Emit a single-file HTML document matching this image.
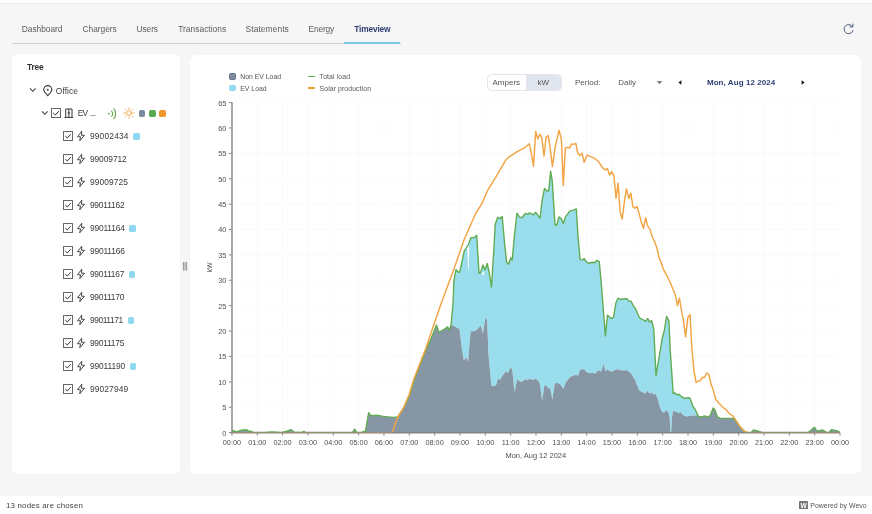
<!DOCTYPE html>
<html><head><meta charset="utf-8"><title>Timeview</title>
<style>
*{box-sizing:border-box;margin:0;padding:0}
html,body{width:872px;height:514px;overflow:hidden;background:#f6f6f6;font-family:"Liberation Sans",sans-serif;color:#555}
.abs{position:absolute}
#top{position:absolute;left:0;top:0;width:872px;height:3.6px;background:#fff;border-bottom:1.2px solid #e9e9e9}
.tab{position:absolute;top:23.7px;font-size:8.4px;line-height:11px;color:#5c5c5c;white-space:nowrap}
.tab.act{color:#2f3f73;font-weight:bold}
#tabline{position:absolute;left:12px;top:42.5px;width:389px;height:1px;background:#cfcfcf}
#actline{position:absolute;left:344px;top:41.9px;width:56.3px;height:1.7px;background:#7ccaea}
.card{position:absolute;background:#fff;border-radius:6.5px}
#tree{left:11.8px;top:54.4px;width:168.4px;height:419.2px}
#chart{left:189.5px;top:54.5px;width:671px;height:419px}
#footer{position:absolute;left:0;top:495.5px;width:872px;height:19px;background:#fff}
.row{position:absolute;left:0;height:16px;width:180px}
.cb{position:absolute;top:3.2px;width:9.8px;height:9.8px;border:0.8px solid #666;border-radius:0.6px;background:#fff}
.cb svg{position:absolute;left:-0.9px;top:-0.9px;width:10px;height:10px;fill:none;stroke:#333;stroke-width:1}
.bolt{position:absolute;left:74.9px;top:2px;width:12px;height:12px;fill:none;stroke:#333;stroke-width:1.8;stroke-linejoin:round}
.t{position:absolute;top:2.9px;font-size:8.4px;line-height:11px;color:#3a3a3a;white-space:nowrap}
.sq{position:absolute;top:5.1px;width:6.5px;height:6.5px;border-radius:1.7px}
.lg{position:absolute;font-size:6.85px;line-height:9px;color:#555;white-space:nowrap}
.ctl{position:absolute;font-size:8px;line-height:10px;color:#555;white-space:nowrap}
svg text{font-family:"Liberation Sans",sans-serif}
</style></head><body><div id="root" style="position:absolute;left:0;top:0;width:872px;height:514px;will-change:transform">
<div id="top"></div>
<span class="tab" style="left:21.75px;letter-spacing:-0.028px">Dashboard</span>
<span class="tab" style="left:82.50px;letter-spacing:-0.027px">Chargers</span>
<span class="tab" style="left:136.60px;letter-spacing:-0.106px">Users</span>
<span class="tab" style="left:178.20px;letter-spacing:0.031px">Transactions</span>
<span class="tab" style="left:245.60px;letter-spacing:0.087px">Statements</span>
<span class="tab" style="left:308.50px;letter-spacing:-0.145px">Energy</span>
<span class="tab act" style="left:354.25px;letter-spacing:-0.175px">Timeview</span>
<div id="tabline"></div><div id="actline"></div>
<svg class="abs" style="left:842px;top:23px;width:13px;height:12px" viewBox="0 0 13 12" fill="none" stroke="#4d5a7a" stroke-width="1" stroke-linecap="round" stroke-linejoin="round"><path d="M10.6 3.6 A4.6 4.6 0 1 0 11.1 7.6"/><path d="M10.9 1 V3.9 H8"/></svg>

<div class="card" id="tree"></div>
<div class="card" id="chart"></div>

<span class="abs" style="left:27px;top:61.5px;font-size:8.4px;line-height:11px;font-weight:bold;color:#333;letter-spacing:-0.210px">Tree</span>
<!-- office row -->
<svg class="abs" style="left:29px;top:87px;width:8px;height:6px" viewBox="0 0 8 6" fill="none" stroke="#444" stroke-width="1.1"><path d="M1 1.3 L3.8 4.3 L6.6 1.3"/></svg>
<svg class="abs" style="left:41.6px;top:84.6px;width:12px;height:12px" viewBox="0 0 11 11" fill="none" stroke="#333" stroke-width="1"><path d="M5.3 9.8 C3 7.4 1.6 5.9 1.6 4.3 A3.7 3.7 0 0 1 9 4.3 C9 5.9 7.6 7.4 5.3 9.8 Z"/><circle cx="5.3" cy="4.4" r="0.9" fill="#333" stroke="none"/></svg>
<span class="t" style="left:55.8px;top:85.6px;letter-spacing:0.085px">Office</span>
<!-- EV row -->
<svg class="abs" style="left:41px;top:110px;width:8px;height:6px" viewBox="0 0 8 6" fill="none" stroke="#444" stroke-width="1.1"><path d="M1 1.3 L3.8 4.3 L6.6 1.3"/></svg>
<span class="cb" style="left:50.9px;top:108.3px"><svg viewBox="0 0 10 10"><path d="M2.3 5.1 L4.3 7 L7.8 3.2"/></svg></span>
<svg class="abs" style="left:64px;top:108px;width:10px;height:10px" viewBox="0 0 10 10" fill="none" stroke="#333" stroke-width="1"><path d="M1.7 9.3 V1 H8 V9.3 M0.6 9.4 H9.2 M4.85 1 V9.3 M3.6 5 H6.1"/></svg>
<span class="t" style="left:77.8px;top:108.3px;letter-spacing:-0.958px">EV</span><span class="t" style="left:90px;top:108.3px;letter-spacing:-0.434px">...</span>
<svg class="abs" style="left:106px;top:106.8px;width:13.4px;height:13.4px" viewBox="0 0 12 12" fill="none" stroke="#6aa84f" stroke-width="1" stroke-linecap="round"><circle cx="2.6" cy="6" r="0.8" fill="#6aa84f" stroke="none"/><path d="M5 3.6 A3.6 3.6 0 0 1 5 8.4"/><path d="M7 1.6 A6.5 6.5 0 0 1 7 10.4"/></svg>
<svg class="abs" style="left:123px;top:107px;width:12px;height:12px" viewBox="0 0 12 12" fill="none" stroke="#f0a040" stroke-width="0.9" stroke-linecap="round"><circle cx="6" cy="6" r="2.3"/><path d="M6 0.8 V2.2 M6 9.8 V11.2 M0.8 6 H2.2 M9.8 6 H11.2 M2.3 2.3 L3.3 3.3 M8.7 8.7 L9.7 9.7 M2.3 9.7 L3.3 8.7 M8.7 3.3 L9.7 2.3"/></svg>
<i class="sq abs" style="left:138.6px;top:110px;background:#7b8a9e"></i>
<i class="sq abs" style="left:149.1px;top:110px;background:#5aab4f"></i>
<i class="sq abs" style="left:159.4px;top:110px;background:#f0982e"></i>
<div class="row" style="top:128px"><span class="cb" style="left:63px"><svg viewBox="0 0 10 10"><path d="M2.3 5.1 L4.3 7 L7.8 3.2"/></svg></span><svg class="bolt" viewBox="0 0 24 24"><path d="M13.5 2.5 L5 13.5 H11 L9.5 21.5 L19 10.5 H13 Z"/></svg><span class="t" style="left:89.9px;letter-spacing:0.191px">99002434</span><i class="sq" style="left:133.10px;background:#8fd9f0"></i></div><div class="row" style="top:151px"><span class="cb" style="left:63px"><svg viewBox="0 0 10 10"><path d="M2.3 5.1 L4.3 7 L7.8 3.2"/></svg></span><svg class="bolt" viewBox="0 0 24 24"><path d="M13.5 2.5 L5 13.5 H11 L9.5 21.5 L19 10.5 H13 Z"/></svg><span class="t" style="left:89.9px;letter-spacing:-0.055px">99009712</span></div><div class="row" style="top:174px"><span class="cb" style="left:63px"><svg viewBox="0 0 10 10"><path d="M2.3 5.1 L4.3 7 L7.8 3.2"/></svg></span><svg class="bolt" viewBox="0 0 24 24"><path d="M13.5 2.5 L5 13.5 H11 L9.5 21.5 L19 10.5 H13 Z"/></svg><span class="t" style="left:89.9px;letter-spacing:0.111px">99009725</span></div><div class="row" style="top:197px"><span class="cb" style="left:63px"><svg viewBox="0 0 10 10"><path d="M2.3 5.1 L4.3 7 L7.8 3.2"/></svg></span><svg class="bolt" viewBox="0 0 24 24"><path d="M13.5 2.5 L5 13.5 H11 L9.5 21.5 L19 10.5 H13 Z"/></svg><span class="t" style="left:89.9px;letter-spacing:-0.191px">99011162</span></div><div class="row" style="top:220px"><span class="cb" style="left:63px"><svg viewBox="0 0 10 10"><path d="M2.3 5.1 L4.3 7 L7.8 3.2"/></svg></span><svg class="bolt" viewBox="0 0 24 24"><path d="M13.5 2.5 L5 13.5 H11 L9.5 21.5 L19 10.5 H13 Z"/></svg><span class="t" style="left:89.9px;letter-spacing:-0.138px">99011164</span><i class="sq" style="left:129.40px;background:#8fd9f0"></i></div><div class="row" style="top:243px"><span class="cb" style="left:63px"><svg viewBox="0 0 10 10"><path d="M2.3 5.1 L4.3 7 L7.8 3.2"/></svg></span><svg class="bolt" viewBox="0 0 24 24"><path d="M13.5 2.5 L5 13.5 H11 L9.5 21.5 L19 10.5 H13 Z"/></svg><span class="t" style="left:89.9px;letter-spacing:-0.138px">99011166</span></div><div class="row" style="top:266px"><span class="cb" style="left:63px"><svg viewBox="0 0 10 10"><path d="M2.3 5.1 L4.3 7 L7.8 3.2"/></svg></span><svg class="bolt" viewBox="0 0 24 24"><path d="M13.5 2.5 L5 13.5 H11 L9.5 21.5 L19 10.5 H13 Z"/></svg><span class="t" style="left:89.9px;letter-spacing:-0.224px">99011167</span><i class="sq" style="left:128.75px;background:#8fd9f0"></i></div><div class="row" style="top:289px"><span class="cb" style="left:63px"><svg viewBox="0 0 10 10"><path d="M2.3 5.1 L4.3 7 L7.8 3.2"/></svg></span><svg class="bolt" viewBox="0 0 24 24"><path d="M13.5 2.5 L5 13.5 H11 L9.5 21.5 L19 10.5 H13 Z"/></svg><span class="t" style="left:89.9px;letter-spacing:-0.224px">99011170</span></div><div class="row" style="top:312px"><span class="cb" style="left:63px"><svg viewBox="0 0 10 10"><path d="M2.3 5.1 L4.3 7 L7.8 3.2"/></svg></span><svg class="bolt" viewBox="0 0 24 24"><path d="M13.5 2.5 L5 13.5 H11 L9.5 21.5 L19 10.5 H13 Z"/></svg><span class="t" style="left:89.9px;letter-spacing:-0.391px">99011171</span><i class="sq" style="left:127.50px;background:#8fd9f0"></i></div><div class="row" style="top:335px"><span class="cb" style="left:63px"><svg viewBox="0 0 10 10"><path d="M2.3 5.1 L4.3 7 L7.8 3.2"/></svg></span><svg class="bolt" viewBox="0 0 24 24"><path d="M13.5 2.5 L5 13.5 H11 L9.5 21.5 L19 10.5 H13 Z"/></svg><span class="t" style="left:89.9px;letter-spacing:-0.224px">99011175</span></div><div class="row" style="top:358px"><span class="cb" style="left:63px"><svg viewBox="0 0 10 10"><path d="M2.3 5.1 L4.3 7 L7.8 3.2"/></svg></span><svg class="bolt" viewBox="0 0 24 24"><path d="M13.5 2.5 L5 13.5 H11 L9.5 21.5 L19 10.5 H13 Z"/></svg><span class="t" style="left:89.9px;letter-spacing:-0.111px">99011190</span><i class="sq" style="left:129.60px;background:#8fd9f0"></i></div><div class="row" style="top:381px"><span class="cb" style="left:63px"><svg viewBox="0 0 10 10"><path d="M2.3 5.1 L4.3 7 L7.8 3.2"/></svg></span><svg class="bolt" viewBox="0 0 24 24"><path d="M13.5 2.5 L5 13.5 H11 L9.5 21.5 L19 10.5 H13 Z"/></svg><span class="t" style="left:89.9px;letter-spacing:0.145px">99027949</span></div>
<!-- splitter -->
<svg class="abs" style="left:182px;top:261px;width:6px;height:11px" viewBox="0 0 6 11" stroke="#777" stroke-width="0.75"><path d="M1.4 1 V9.6 M3 1 V9.6 M4.6 1 V9.6"/></svg>

<!-- legend -->
<i class="abs" style="left:229.2px;top:73.4px;width:6.6px;height:6.6px;border-radius:1.6px;background:#7d8ba0;border:0.8px solid #68768c"></i>
<span class="lg" style="left:240.3px;top:72.1px">Non EV Load</span>
<i class="abs" style="left:229.2px;top:84.6px;width:6.6px;height:6.6px;border-radius:1.6px;background:#9adcf0;border:0.8px solid #8ad4ec"></i>
<span class="lg" style="left:240.3px;top:83.5px">EV Load</span>
<i class="abs" style="left:308px;top:75.7px;width:6.5px;height:1.8px;border-radius:1px;background:#5aab4f"></i>
<span class="lg" style="left:319.6px;top:72.1px;letter-spacing:0.116px">Total load</span>
<i class="abs" style="left:308px;top:87.1px;width:6.5px;height:1.8px;border-radius:1px;background:#f0982e"></i>
<span class="lg" style="left:319.6px;top:83.5px;letter-spacing:0.100px">Solar production</span>

<!-- controls -->
<div class="abs" style="left:487px;top:73.5px;width:75px;height:17.4px;border:1px solid #e3e5ea;border-radius:4.5px;background:#fff;overflow:hidden"><div style="position:absolute;left:37.5px;top:0;width:38px;height:17px;background:#e1e5ee"></div></div>
<span class="ctl" style="left:492.5px;top:77.6px">Ampers</span>
<span class="ctl" style="left:537.5px;top:77.6px">kW</span>
<span class="ctl" style="left:575px;top:77.6px">Period:</span>
<span class="ctl" style="left:618.3px;top:77.6px">Daily</span>
<svg class="abs" style="left:656px;top:80px;width:7px;height:5px" viewBox="0 0 7 5"><path d="M0.7 1.3 H6.3 L3.5 4.1 Z" fill="#666"/></svg>
<svg class="abs" style="left:677px;top:79px;width:6px;height:7px" viewBox="0 0 6 7"><path d="M4.4 1.2 V5.8 L1.4 3.5 Z" fill="#111"/></svg>
<span class="ctl" style="left:706.9px;top:78.3px;font-weight:bold;color:#2f3f73;letter-spacing:0.072px">Mon, Aug 12 2024</span>
<svg class="abs" style="left:799.5px;top:79px;width:6px;height:7px" viewBox="0 0 6 7"><path d="M1.6 1.2 V5.8 L4.6 3.5 Z" fill="#111"/></svg>

<!-- chart -->
<svg class="abs" style="left:0;top:0;width:872px;height:514px" viewBox="0 0 872 514">
<g stroke="#f6f6f6" stroke-width="0.6"><line x1="257.24" y1="102.60" x2="257.24" y2="432.60"/><line x1="282.57" y1="102.60" x2="282.57" y2="432.60"/><line x1="307.91" y1="102.60" x2="307.91" y2="432.60"/><line x1="333.25" y1="102.60" x2="333.25" y2="432.60"/><line x1="358.59" y1="102.60" x2="358.59" y2="432.60"/><line x1="383.93" y1="102.60" x2="383.93" y2="432.60"/><line x1="409.26" y1="102.60" x2="409.26" y2="432.60"/><line x1="434.60" y1="102.60" x2="434.60" y2="432.60"/><line x1="459.94" y1="102.60" x2="459.94" y2="432.60"/><line x1="485.27" y1="102.60" x2="485.27" y2="432.60"/><line x1="510.61" y1="102.60" x2="510.61" y2="432.60"/><line x1="535.95" y1="102.60" x2="535.95" y2="432.60"/><line x1="561.29" y1="102.60" x2="561.29" y2="432.60"/><line x1="586.62" y1="102.60" x2="586.62" y2="432.60"/><line x1="611.96" y1="102.60" x2="611.96" y2="432.60"/><line x1="637.30" y1="102.60" x2="637.30" y2="432.60"/><line x1="662.64" y1="102.60" x2="662.64" y2="432.60"/><line x1="687.98" y1="102.60" x2="687.98" y2="432.60"/><line x1="713.31" y1="102.60" x2="713.31" y2="432.60"/><line x1="738.65" y1="102.60" x2="738.65" y2="432.60"/><line x1="763.99" y1="102.60" x2="763.99" y2="432.60"/><line x1="789.33" y1="102.60" x2="789.33" y2="432.60"/><line x1="814.66" y1="102.60" x2="814.66" y2="432.60"/><line x1="840.00" y1="102.60" x2="840.00" y2="432.60"/><line x1="231.90" y1="407.22" x2="840.00" y2="407.22"/><line x1="231.90" y1="381.83" x2="840.00" y2="381.83"/><line x1="231.90" y1="356.45" x2="840.00" y2="356.45"/><line x1="231.90" y1="331.06" x2="840.00" y2="331.06"/><line x1="231.90" y1="305.68" x2="840.00" y2="305.68"/><line x1="231.90" y1="280.29" x2="840.00" y2="280.29"/><line x1="231.90" y1="254.91" x2="840.00" y2="254.91"/><line x1="231.90" y1="229.52" x2="840.00" y2="229.52"/><line x1="231.90" y1="204.14" x2="840.00" y2="204.14"/><line x1="231.90" y1="178.75" x2="840.00" y2="178.75"/><line x1="231.90" y1="153.37" x2="840.00" y2="153.37"/><line x1="231.90" y1="127.98" x2="840.00" y2="127.98"/><line x1="231.90" y1="102.60" x2="840.00" y2="102.60"/></g>
<g stroke="#858585" stroke-width="0.95"><line x1="231.90" y1="432.60" x2="231.90" y2="435.70"/><line x1="257.24" y1="432.60" x2="257.24" y2="435.70"/><line x1="282.57" y1="432.60" x2="282.57" y2="435.70"/><line x1="307.91" y1="432.60" x2="307.91" y2="435.70"/><line x1="333.25" y1="432.60" x2="333.25" y2="435.70"/><line x1="358.59" y1="432.60" x2="358.59" y2="435.70"/><line x1="383.93" y1="432.60" x2="383.93" y2="435.70"/><line x1="409.26" y1="432.60" x2="409.26" y2="435.70"/><line x1="434.60" y1="432.60" x2="434.60" y2="435.70"/><line x1="459.94" y1="432.60" x2="459.94" y2="435.70"/><line x1="485.27" y1="432.60" x2="485.27" y2="435.70"/><line x1="510.61" y1="432.60" x2="510.61" y2="435.70"/><line x1="535.95" y1="432.60" x2="535.95" y2="435.70"/><line x1="561.29" y1="432.60" x2="561.29" y2="435.70"/><line x1="586.62" y1="432.60" x2="586.62" y2="435.70"/><line x1="611.96" y1="432.60" x2="611.96" y2="435.70"/><line x1="637.30" y1="432.60" x2="637.30" y2="435.70"/><line x1="662.64" y1="432.60" x2="662.64" y2="435.70"/><line x1="687.98" y1="432.60" x2="687.98" y2="435.70"/><line x1="713.31" y1="432.60" x2="713.31" y2="435.70"/><line x1="738.65" y1="432.60" x2="738.65" y2="435.70"/><line x1="763.99" y1="432.60" x2="763.99" y2="435.70"/><line x1="789.33" y1="432.60" x2="789.33" y2="435.70"/><line x1="814.66" y1="432.60" x2="814.66" y2="435.70"/><line x1="840.00" y1="432.60" x2="840.00" y2="435.70"/><line x1="228.80" y1="432.60" x2="231.90" y2="432.60"/><line x1="228.80" y1="407.22" x2="231.90" y2="407.22"/><line x1="228.80" y1="381.83" x2="231.90" y2="381.83"/><line x1="228.80" y1="356.45" x2="231.90" y2="356.45"/><line x1="228.80" y1="331.06" x2="231.90" y2="331.06"/><line x1="228.80" y1="305.68" x2="231.90" y2="305.68"/><line x1="228.80" y1="280.29" x2="231.90" y2="280.29"/><line x1="228.80" y1="254.91" x2="231.90" y2="254.91"/><line x1="228.80" y1="229.52" x2="231.90" y2="229.52"/><line x1="228.80" y1="204.14" x2="231.90" y2="204.14"/><line x1="228.80" y1="178.75" x2="231.90" y2="178.75"/><line x1="228.80" y1="153.37" x2="231.90" y2="153.37"/><line x1="228.80" y1="127.98" x2="231.90" y2="127.98"/><line x1="228.80" y1="102.60" x2="231.90" y2="102.60"/></g>
<path d="M232 102.3 V433.4" fill="none" stroke="#929292" stroke-width="1.6"/><path d="M231.2 432.6 H840" fill="none" stroke="#828282" stroke-width="1.6"/>
<defs><clipPath id="ca"><rect x="231" y="100" width="609.6" height="332.3"/></clipPath></defs>
<g clip-path="url(#ca)">
<path d="M231.75 431.50 L232.50 430.30 L236.70 432.00 L240.80 430.30 L246.70 429.70 L248.30 431.00 L251.70 431.50 L253.30 432.60 L265.00 432.60 L271.70 432.00 L281.70 432.60 L287.50 431.00 L291.30 429.70 L294.20 432.20 L301.70 432.60 L303.80 431.30 L305.80 432.60 L310.00 432.60 L352.50 432.60 L354.70 429.20 L356.70 432.60 L361.70 432.60 L363.30 431.50 L365.30 432.00 L368.70 412.70 L370.40 415.20 L373.40 415.70 L376.70 415.20 L383.40 416.40 L393.40 417.40 L397.60 416.90 L403.80 407.90 L409.80 394.30 L414.10 380.10 L425.90 350.00 L431.20 338.20 L436.50 324.90 L438.80 332.40 L443.80 329.50 L447.70 326.90 L449.00 330.20 L451.00 325.70 L453.20 301.40 L453.80 281.40 L456.00 269.70 L458.50 272.20 L459.70 272.20 L464.20 251.20 L468.40 244.50 L470.90 237.80 L474.30 237.50 L476.70 235.20 L479.00 273.10 L480.60 272.50 L482.90 265.00 L485.00 270.00 L487.25 263.50 L489.40 273.75 L491.50 287.00 L493.75 251.25 L495.20 224.50 L497.70 217.30 L499.90 218.60 L502.20 216.60 L504.40 241.20 L506.60 262.10 L508.60 264.30 L510.70 257.90 L512.20 260.10 L514.40 236.20 L516.90 213.10 L519.40 216.90 L521.90 217.80 L525.60 213.30 L527.80 214.40 L529.50 212.80 L533.60 214.80 L535.80 212.30 L540.00 218.10 L542.30 199.40 L544.50 188.50 L547.00 191.00 L548.70 191.00 L550.60 171.20 L552.20 180.70 L555.00 224.50 L556.70 225.30 L559.00 216.90 L561.20 218.60 L563.40 223.60 L565.40 216.90 L569.90 211.10 L573.80 209.90 L576.30 208.90 L578.00 236.20 L580.10 259.60 L582.60 259.90 L584.20 258.60 L586.40 261.90 L588.80 263.30 L592.60 262.30 L594.80 262.80 L597.10 260.20 L599.30 261.90 L601.50 286.20 L605.40 336.00 L607.50 315.10 L611.00 318.50 L613.40 317.60 L616.00 302.50 L618.20 298.00 L620.20 299.50 L624.40 298.70 L626.90 298.80 L628.90 300.90 L631.10 301.30 L633.60 306.20 L635.40 308.40 L639.40 317.80 L643.60 320.00 L645.60 321.30 L647.60 318.40 L649.60 322.10 L651.70 320.70 L653.80 329.30 L656.00 375.70 L662.20 338.50 L664.40 330.10 L666.60 316.40 L668.90 320.90 L670.20 350.20 L671.50 368.70 L673.20 393.50 L675.20 393.00 L677.20 395.10 L678.90 394.10 L681.00 396.30 L684.40 398.30 L689.40 397.70 L690.20 398.80 L692.70 405.80 L695.30 409.70 L698.30 416.40 L701.90 416.90 L704.80 415.90 L707.80 416.90 L710.30 415.50 L713.10 408.00 L715.00 410.00 L717.50 417.20 L720.30 418.10 L733.70 418.40 L738.70 425.20 L743.70 430.60 L747.10 432.60 L751.30 432.60 L753.40 429.90 L757.50 430.90 L762.30 432.60 L808.40 432.60 L814.50 427.30 L816.90 431.10 L822.80 430.00 L826.60 432.60 L829.00 432.60 L831.25 429.70 L837.50 430.90 L840.00 432.60 L840.00 432.60 L837.50 430.90 L831.25 429.70 L829.00 432.60 L826.60 432.60 L822.80 430.00 L816.90 431.10 L814.50 427.30 L808.40 432.60 L762.30 432.60 L757.50 430.90 L753.40 429.90 L751.30 432.60 L747.10 432.60 L743.70 430.60 L738.70 425.20 L733.70 418.40 L720.30 418.10 L717.50 417.20 L715.00 410.00 L713.10 408.00 L710.30 415.50 L707.80 416.90 L704.80 415.90 L701.90 416.90 L698.30 416.40 L696.90 415.50 L691.90 415.50 L686.90 416.40 L683.50 415.50 L680.50 412.20 L678.50 413.00 L676.00 411.40 L672.90 411.00 L671.90 418.00 L671.20 431.90 L670.30 431.90 L669.70 418.00 L668.60 413.00 L666.80 410.00 L664.80 411.90 L662.60 412.50 L660.10 408.00 L657.60 398.80 L655.50 393.80 L653.40 394.60 L651.80 392.60 L649.30 393.80 L647.60 390.80 L645.10 393.50 L639.20 390.50 L635.10 380.00 L630.90 373.20 L626.80 370.20 L621.70 370.60 L618.30 369.50 L616.50 369.60 L613.80 370.60 L611.50 371.80 L607.40 369.50 L605.40 371.00 L603.40 363.90 L601.20 371.50 L597.90 370.60 L595.40 373.80 L593.70 373.10 L588.70 373.10 L586.20 371.80 L584.00 369.30 L580.30 369.60 L577.80 376.00 L576.20 374.80 L570.30 376.80 L565.60 382.70 L563.30 389.00 L561.10 385.20 L559.40 383.80 L556.60 382.70 L554.70 383.80 L552.40 399.70 L550.20 388.20 L548.10 388.20 L546.10 385.20 L544.40 385.20 L542.20 401.10 L539.70 382.70 L536.00 378.50 L533.50 379.80 L531.80 379.80 L529.70 378.50 L527.30 380.20 L525.50 379.30 L521.80 381.80 L519.30 381.30 L517.10 379.00 L514.60 392.20 L512.30 370.10 L510.60 367.10 L508.10 373.10 L505.90 371.50 L502.60 375.50 L500.10 379.80 L498.10 378.50 L495.90 385.70 L491.40 385.70 L488.50 355.00 L487.10 319.75 L485.40 317.90 L482.90 333.75 L480.90 325.60 L475.60 331.00 L470.60 331.25 L468.10 361.25 L466.00 357.50 L463.75 360.60 L461.80 348.00 L459.40 329.00 L455.50 327.00 L453.50 325.50 L451.00 325.70 L449.00 330.20 L447.70 326.90 L443.80 329.50 L438.80 332.40 L436.50 324.90 L431.20 338.20 L425.90 350.00 L414.10 380.10 L409.80 394.30 L403.80 407.90 L397.60 416.90 L393.40 417.40 L383.40 416.40 L376.70 415.20 L373.40 415.70 L370.40 415.20 L368.70 412.70 L365.30 432.00 L363.30 431.50 L361.70 432.60 L356.70 432.60 L354.70 429.20 L352.50 432.60 L310.00 432.60 L305.80 432.60 L303.80 431.30 L301.70 432.60 L294.20 432.20 L291.30 429.70 L287.50 431.00 L281.70 432.60 L271.70 432.00 L265.00 432.60 L253.30 432.60 L251.70 431.50 L248.30 431.00 L246.70 429.70 L240.80 430.30 L236.70 432.00 L232.50 430.30 L231.75 431.50 Z" fill="#9adeee"/>
<path d="M467.2 247 L469.3 245.2 L468.7 270 L468.2 270 Z M481.8 273.2 L484.6 271.5 L483.2 276 Z" fill="#fff"/>
<path d="M231.75 431.50 L232.50 430.30 L236.70 432.00 L240.80 430.30 L246.70 429.70 L248.30 431.00 L251.70 431.50 L253.30 432.60 L265.00 432.60 L271.70 432.00 L281.70 432.60 L287.50 431.00 L291.30 429.70 L294.20 432.20 L301.70 432.60 L303.80 431.30 L305.80 432.60 L310.00 432.60 L352.50 432.60 L354.70 429.20 L356.70 432.60 L361.70 432.60 L363.30 431.50 L365.30 432.00 L368.70 412.70 L370.40 415.20 L373.40 415.70 L376.70 415.20 L383.40 416.40 L393.40 417.40 L397.60 416.90 L403.80 407.90 L409.80 394.30 L414.10 380.10 L425.90 350.00 L431.20 338.20 L436.50 324.90 L438.80 332.40 L443.80 329.50 L447.70 326.90 L449.00 330.20 L451.00 325.70 L453.50 325.50 L455.50 327.00 L459.40 329.00 L461.80 348.00 L463.75 360.60 L466.00 357.50 L468.10 361.25 L470.60 331.25 L475.60 331.00 L480.90 325.60 L482.90 333.75 L485.40 317.90 L487.10 319.75 L488.50 355.00 L491.40 385.70 L495.90 385.70 L498.10 378.50 L500.10 379.80 L502.60 375.50 L505.90 371.50 L508.10 373.10 L510.60 367.10 L512.30 370.10 L514.60 392.20 L517.10 379.00 L519.30 381.30 L521.80 381.80 L525.50 379.30 L527.30 380.20 L529.70 378.50 L531.80 379.80 L533.50 379.80 L536.00 378.50 L539.70 382.70 L542.20 401.10 L544.40 385.20 L546.10 385.20 L548.10 388.20 L550.20 388.20 L552.40 399.70 L554.70 383.80 L556.60 382.70 L559.40 383.80 L561.10 385.20 L563.30 389.00 L565.60 382.70 L570.30 376.80 L576.20 374.80 L577.80 376.00 L580.30 369.60 L584.00 369.30 L586.20 371.80 L588.70 373.10 L593.70 373.10 L595.40 373.80 L597.90 370.60 L601.20 371.50 L603.40 363.90 L605.40 371.00 L607.40 369.50 L611.50 371.80 L613.80 370.60 L616.50 369.60 L618.30 369.50 L621.70 370.60 L626.80 370.20 L630.90 373.20 L635.10 380.00 L639.20 390.50 L645.10 393.50 L647.60 390.80 L649.30 393.80 L651.80 392.60 L653.40 394.60 L655.50 393.80 L657.60 398.80 L660.10 408.00 L662.60 412.50 L664.80 411.90 L666.80 410.00 L668.60 413.00 L669.70 418.00 L670.30 431.90 L671.20 431.90 L671.90 418.00 L672.90 411.00 L676.00 411.40 L678.50 413.00 L680.50 412.20 L683.50 415.50 L686.90 416.40 L691.90 415.50 L696.90 415.50 L698.30 416.40 L701.90 416.90 L704.80 415.90 L707.80 416.90 L710.30 415.50 L713.10 408.00 L715.00 410.00 L717.50 417.20 L720.30 418.10 L733.70 418.40 L738.70 425.20 L743.70 430.60 L747.10 432.60 L751.30 432.60 L753.40 429.90 L757.50 430.90 L762.30 432.60 L808.40 432.60 L814.50 427.30 L816.90 431.10 L822.80 430.00 L826.60 432.60 L829.00 432.60 L831.25 429.70 L837.50 430.90 L840.00 432.60 L840.00 432.60 L231.75 432.60 Z" fill="#8796a5"/>
<path d="M231.75 431.50 L232.50 430.30 L236.70 432.00 L240.80 430.30 L246.70 429.70 L248.30 431.00 L251.70 431.50 L253.30 432.60 L265.00 432.60 L271.70 432.00 L281.70 432.60 L287.50 431.00 L291.30 429.70 L294.20 432.20 L301.70 432.60 L303.80 431.30 L305.80 432.60 L310.00 432.60 L352.50 432.60 L354.70 429.20 L356.70 432.60 L361.70 432.60 L363.30 431.50 L365.30 432.00 L368.70 412.70 L370.40 415.20 L373.40 415.70 L376.70 415.20 L383.40 416.40 L393.40 417.40 L397.60 416.90 L403.80 407.90 L409.80 394.30 L414.10 380.10 L425.90 350.00 L431.20 338.20 L436.50 324.90 L438.80 332.40 L443.80 329.50 L447.70 326.90 L449.00 330.20 L451.00 325.70 L453.20 301.40 L453.80 281.40 L456.00 269.70 L458.50 272.20 L459.70 272.20 L464.20 251.20 L468.40 244.50 L470.90 237.80 L474.30 237.50 L476.70 235.20 L479.00 273.10 L480.60 272.50 L482.90 265.00 L485.00 270.00 L487.25 263.50 L489.40 273.75 L491.50 287.00 L493.75 251.25 L495.20 224.50 L497.70 217.30 L499.90 218.60 L502.20 216.60 L504.40 241.20 L506.60 262.10 L508.60 264.30 L510.70 257.90 L512.20 260.10 L514.40 236.20 L516.90 213.10 L519.40 216.90 L521.90 217.80 L525.60 213.30 L527.80 214.40 L529.50 212.80 L533.60 214.80 L535.80 212.30 L540.00 218.10 L542.30 199.40 L544.50 188.50 L547.00 191.00 L548.70 191.00 L550.60 171.20 L552.20 180.70 L555.00 224.50 L556.70 225.30 L559.00 216.90 L561.20 218.60 L563.40 223.60 L565.40 216.90 L569.90 211.10 L573.80 209.90 L576.30 208.90 L578.00 236.20 L580.10 259.60 L582.60 259.90 L584.20 258.60 L586.40 261.90 L588.80 263.30 L592.60 262.30 L594.80 262.80 L597.10 260.20 L599.30 261.90 L601.50 286.20 L605.40 336.00 L607.50 315.10 L611.00 318.50 L613.40 317.60 L616.00 302.50 L618.20 298.00 L620.20 299.50 L624.40 298.70 L626.90 298.80 L628.90 300.90 L631.10 301.30 L633.60 306.20 L635.40 308.40 L639.40 317.80 L643.60 320.00 L645.60 321.30 L647.60 318.40 L649.60 322.10 L651.70 320.70 L653.80 329.30 L656.00 375.70 L662.20 338.50 L664.40 330.10 L666.60 316.40 L668.90 320.90 L670.20 350.20 L671.50 368.70 L673.20 393.50 L675.20 393.00 L677.20 395.10 L678.90 394.10 L681.00 396.30 L684.40 398.30 L689.40 397.70 L690.20 398.80 L692.70 405.80 L695.30 409.70 L698.30 416.40 L701.90 416.90 L704.80 415.90 L707.80 416.90 L710.30 415.50 L713.10 408.00 L715.00 410.00 L717.50 417.20 L720.30 418.10 L733.70 418.40 L738.70 425.20 L743.70 430.60 L747.10 432.60 L751.30 432.60 L753.40 429.90 L757.50 430.90 L762.30 432.60 L808.40 432.60 L814.50 427.30 L816.90 431.10 L822.80 430.00 L826.60 432.60 L829.00 432.60 L831.25 429.70 L837.50 430.90 L840.00 432.60" fill="none" stroke="#61ab52" stroke-width="1.4" stroke-linejoin="round"/>
<path d="M231.75 432.60 L391.80 432.60 L393.40 430.00 L396.00 421.00 L398.10 416.90 L403.50 407.70 L409.30 394.30 L413.50 380.10 L425.20 350.00 L440.60 305.00 L454.30 268.00 L464.20 239.50 L476.00 212.80 L481.70 204.00 L487.50 190.70 L496.70 175.70 L505.90 159.80 L509.30 156.80 L516.80 151.90 L525.20 147.30 L529.30 143.90 L531.50 154.00 L533.50 166.20 L535.70 131.40 L537.70 138.90 L539.90 134.20 L541.90 138.10 L544.00 156.10 L546.10 137.20 L548.20 135.60 L550.20 148.10 L552.40 166.50 L555.30 146.40 L559.10 130.20 L561.40 139.70 L563.30 185.40 L565.30 148.10 L567.80 147.30 L569.50 148.10 L571.60 143.90 L573.60 144.40 L575.80 143.40 L577.80 153.10 L580.00 155.60 L582.00 153.10 L584.20 162.30 L587.00 155.10 L589.50 156.10 L593.70 157.80 L598.70 161.80 L602.90 168.20 L605.10 169.80 L607.40 168.50 L609.50 175.00 L611.70 171.60 L613.90 175.80 L616.10 198.20 L618.10 183.10 L620.10 211.90 L622.20 219.10 L624.60 200.20 L626.40 188.80 L628.80 198.50 L630.90 193.10 L632.90 206.90 L635.10 208.20 L637.10 206.40 L639.30 214.40 L641.50 222.70 L643.50 228.30 L645.70 217.70 L647.70 226.10 L649.80 228.90 L652.70 237.90 L654.80 242.00 L656.90 247.90 L658.90 257.10 L661.00 262.10 L663.20 268.80 L669.40 280.50 L675.30 294.70 L677.40 305.60 L679.40 298.10 L681.40 310.00 L683.60 321.70 L685.60 336.80 L687.80 317.60 L690.00 314.50 L692.00 350.20 L693.90 370.40 L696.10 382.50 L698.60 380.90 L700.30 380.70 L702.40 377.20 L704.40 377.50 L706.80 373.00 L708.90 374.50 L711.10 384.60 L713.10 389.60 L715.70 399.20 L719.50 403.80 L723.70 408.00 L726.20 409.70 L729.50 413.90 L732.90 415.90 L737.10 422.20 L741.20 428.10 L744.60 431.40 L747.90 432.60 L840.00 432.60" fill="none" stroke="#f2a443" stroke-width="1.45" stroke-linejoin="round"/>
</g>
<g font-size="7" fill="#4f4f4f"><text transform="translate(231.90 445.1) scale(1.04 1)" text-anchor="middle">00:00</text><text transform="translate(257.24 445.1) scale(1.04 1)" text-anchor="middle">01:00</text><text transform="translate(282.57 445.1) scale(1.04 1)" text-anchor="middle">02:00</text><text transform="translate(307.91 445.1) scale(1.04 1)" text-anchor="middle">03:00</text><text transform="translate(333.25 445.1) scale(1.04 1)" text-anchor="middle">04:00</text><text transform="translate(358.59 445.1) scale(1.04 1)" text-anchor="middle">05:00</text><text transform="translate(383.93 445.1) scale(1.04 1)" text-anchor="middle">06:00</text><text transform="translate(409.26 445.1) scale(1.04 1)" text-anchor="middle">07:00</text><text transform="translate(434.60 445.1) scale(1.04 1)" text-anchor="middle">08:00</text><text transform="translate(459.94 445.1) scale(1.04 1)" text-anchor="middle">09:00</text><text transform="translate(485.27 445.1) scale(1.04 1)" text-anchor="middle">10:00</text><text transform="translate(510.61 445.1) scale(1.04 1)" text-anchor="middle">11:00</text><text transform="translate(535.95 445.1) scale(1.04 1)" text-anchor="middle">12:00</text><text transform="translate(561.29 445.1) scale(1.04 1)" text-anchor="middle">13:00</text><text transform="translate(586.62 445.1) scale(1.04 1)" text-anchor="middle">14:00</text><text transform="translate(611.96 445.1) scale(1.04 1)" text-anchor="middle">15:00</text><text transform="translate(637.30 445.1) scale(1.04 1)" text-anchor="middle">16:00</text><text transform="translate(662.64 445.1) scale(1.04 1)" text-anchor="middle">17:00</text><text transform="translate(687.98 445.1) scale(1.04 1)" text-anchor="middle">18:00</text><text transform="translate(713.31 445.1) scale(1.04 1)" text-anchor="middle">19:00</text><text transform="translate(738.65 445.1) scale(1.04 1)" text-anchor="middle">20:00</text><text transform="translate(763.99 445.1) scale(1.04 1)" text-anchor="middle">21:00</text><text transform="translate(789.33 445.1) scale(1.04 1)" text-anchor="middle">22:00</text><text transform="translate(814.66 445.1) scale(1.04 1)" text-anchor="middle">23:00</text><text transform="translate(840.00 445.1) scale(1.04 1)" text-anchor="middle">00:00</text><text transform="translate(226.3 435.50) scale(1.05 1)" text-anchor="end">0</text><text transform="translate(226.3 410.12) scale(1.05 1)" text-anchor="end">5</text><text transform="translate(226.3 384.73) scale(1.05 1)" text-anchor="end">10</text><text transform="translate(226.3 359.35) scale(1.05 1)" text-anchor="end">15</text><text transform="translate(226.3 333.96) scale(1.05 1)" text-anchor="end">20</text><text transform="translate(226.3 308.58) scale(1.05 1)" text-anchor="end">25</text><text transform="translate(226.3 283.19) scale(1.05 1)" text-anchor="end">30</text><text transform="translate(226.3 257.81) scale(1.05 1)" text-anchor="end">35</text><text transform="translate(226.3 232.42) scale(1.05 1)" text-anchor="end">40</text><text transform="translate(226.3 207.04) scale(1.05 1)" text-anchor="end">45</text><text transform="translate(226.3 181.65) scale(1.05 1)" text-anchor="end">50</text><text transform="translate(226.3 156.27) scale(1.05 1)" text-anchor="end">55</text><text transform="translate(226.3 130.88) scale(1.05 1)" text-anchor="end">60</text><text transform="translate(226.3 105.50) scale(1.05 1)" text-anchor="end">65</text>
<text transform="translate(535.8 457.9) scale(1.07 1)" text-anchor="middle">Mon, Aug 12 2024</text>
<text transform="translate(211.5 267.5) rotate(-90)" text-anchor="middle">kW</text></g>
</svg>

<div id="footer"></div>
<span class="abs" style="left:6px;top:500.5px;font-size:7.9px;line-height:10px;color:#444;letter-spacing:0.178px">13 nodes are chosen</span>
<i class="abs" style="left:799.2px;top:500.5px;width:8.7px;height:8.5px;background:#787878;border-radius:0.6px"></i>
<span class="abs" style="left:800.5px;top:500.6px;font-size:6.6px;line-height:9px;color:#fff;font-weight:bold">W</span>
<span class="abs" style="left:810.3px;top:500.9px;font-size:6.9px;line-height:9px;color:#555;letter-spacing:0.035px">Powered by Wevo</span>
</div></body></html>
